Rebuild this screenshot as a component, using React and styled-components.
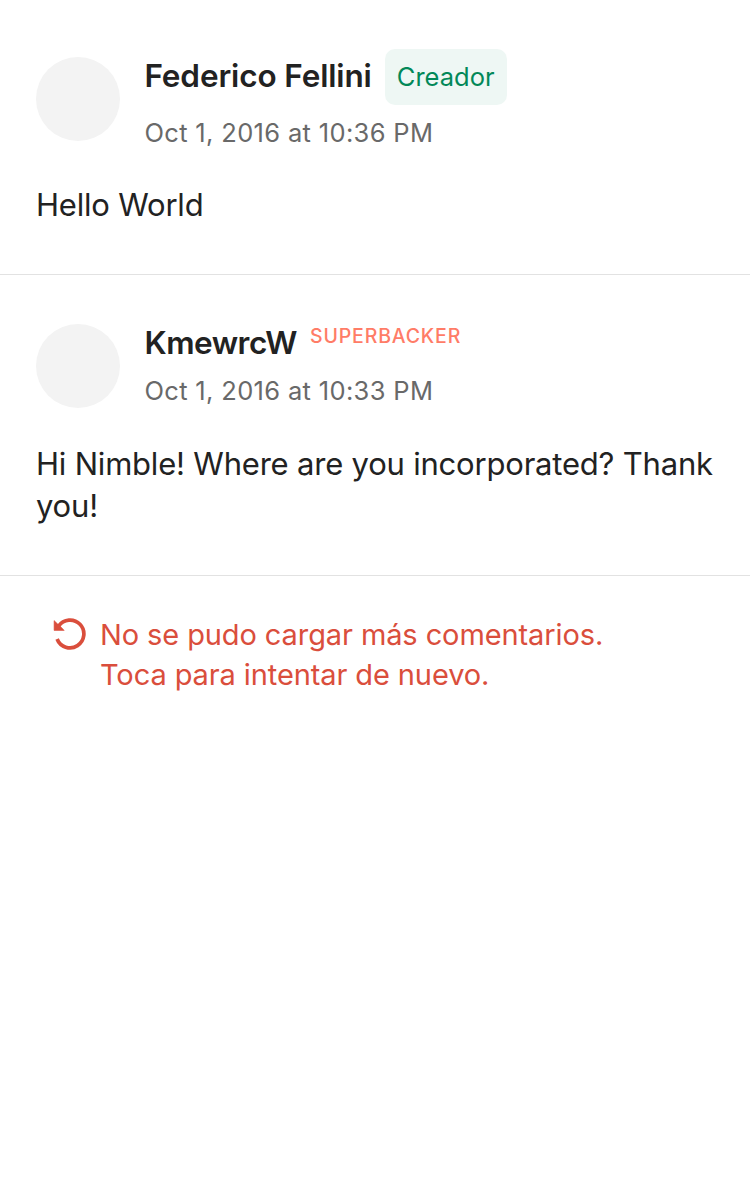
import React from 'react';
import styled, { createGlobalStyle } from 'styled-components';

const GlobalStyle = createGlobalStyle`
  * { box-sizing: border-box; }
  body { margin: 0; background: #fff; font-family: Inter, "Liberation Sans", sans-serif; color: #222; }
`;

const Comment = styled.article`
  height: ${(p) => p.$height}px;
  padding: 49px 36px 0;
  border-bottom: 1px solid #e2e2e2;
`;

const Header = styled.header`
  display: flex;
  gap: 24px;
  height: ${(p) => p.$height}px;
`;

const Avatar = styled.div`
  width: 84px;
  height: 84px;
  margin-top: ${(p) => p.$top}px;
  border-radius: 50%;
  background: #f3f3f3;
`;

const NameRow = styled.div`
  display: flex;
  align-items: flex-start;
  gap: 13px;
  height: ${(p) => p.$height}px;
`;

const Name = styled.h2`
  margin: 0;
  padding-left: 0.5px;
  font-size: 31.5px;
  line-height: ${(p) => p.$line}px;
  font-weight: 600;
  letter-spacing: ${(p) => p.$spacing}px;
  white-space: nowrap;
`;

const CreatorBadge = styled.span`
  height: 56px;
  padding: 0 12px;
  border-radius: 10px;
  background: #eef7f4;
  color: #028858;
  font-size: 25.5px;
  line-height: 56px;
  letter-spacing: 0.03px;
`;

const BackerLabel = styled.span`
  padding-left: 0.3px;
  color: #ff7c67;
  font-size: 19.5px;
  font-weight: 550;
  line-height: 25px;
  letter-spacing: 0.82px;
`;

const Time = styled.time`
  display: block;
  padding-left: 0.4px;
  color: #696969;
  font-size: 25.5px;
  line-height: 31px;
  letter-spacing: 0.34px;
  white-space: nowrap;
`;

const Body = styled.p`
  margin: 0 -4px 0 0;
  font-size: 31px;
  line-height: 42px;
  letter-spacing: -0.2px;
`;

const Retry = styled.button`
  display: flex;
  gap: 13px;
  margin: 0;
  padding: 39px 53px;
  border: 0;
  background: none;
  color: #da4e3c;
  font: 400 29px/40px Inter, "Liberation Sans", sans-serif;
  text-align: left;
`;

const RetryIcon = styled.svg`
  width: 34px;
  height: 34px;
  flex: none;
  margin-top: 2px;
`;

const Line = styled.span`
  display: block;
  white-space: nowrap;
  letter-spacing: -0.1px;
`;

export default function App() {
  return (
    <main>
      <GlobalStyle />
      <Comment $height={275}>
        <Header $height={135}>
          <Avatar $top={8} />
          <div>
            <NameRow $height={68}>
              <Name $line={53} $spacing={-0.13}>Federico Fellini</Name>
              <CreatorBadge>Creador</CreatorBadge>
            </NameRow>
            <Time>Oct 1, 2016 at 10:36 PM</Time>
          </div>
        </Header>
        <Body>Hello World</Body>
      </Comment>
      <Comment $height={301}>
        <Header $height={119}>
          <Avatar $top={0} />
          <div>
            <NameRow $height={51}>
              <Name $line={37} $spacing={-0.5}>KmewrcW</Name>
              <BackerLabel>SUPERBACKER</BackerLabel>
            </NameRow>
            <Time>Oct 1, 2016 at 10:33 PM</Time>
          </div>
        </Header>
        <Body>Hi Nimble! Where are you incorporated? Thank you!</Body>
      </Comment>
      <Retry>
        <RetryIcon viewBox="0 0 34 34" fill="none">
          <path d="M5.6 9.1A13.85 13.85 0 1 1 4.1 22" stroke="currentColor" strokeWidth="3.7" />
          <path d="M1.1 3.6V13.4H11.2L8.2 10.2L4.6 6.9Z" fill="currentColor" stroke="currentColor" strokeWidth="0.6" />
        </RetryIcon>
        <span>
          <Line>No se pudo cargar más comentarios.</Line>
          <Line>Toca para intentar de nuevo.</Line>
        </span>
      </Retry>
    </main>
  );
}
